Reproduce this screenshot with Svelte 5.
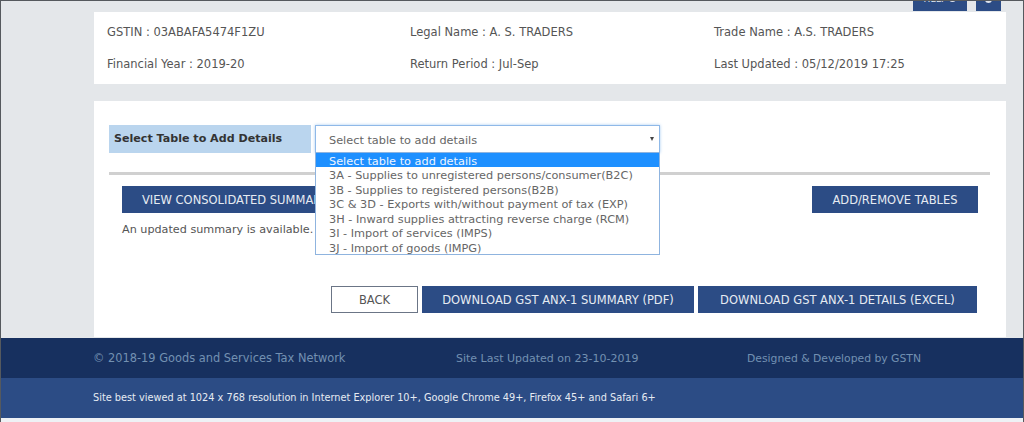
<script>
	const options = [
		'Select table to add details',
		'3A - Supplies to unregistered persons/consumer(B2C)',
		'3B - Supplies to registered persons(B2B)',
		'3C & 3D - Exports with/without payment of tax (EXP)',
		'3H - Inward supplies attracting reverse charge (RCM)',
		'3I - Import of services (IMPS)',
		'3J - Import of goods (IMPG)'
	];
</script>

<div class="page">
	<main class="content">
		<div class="top-actions">
			<button type="button" class="btn help">HELP <span class="dot"></span></button>
			<button type="button" class="btn refresh"><span class="dot"></span></button>
		</div>

		<section class="card info">
			<div class="info-row">
				<span>GSTIN : 03ABAFA5474F1ZU</span>
				<span>Legal Name : A. S. TRADERS</span>
				<span>Trade Name : A.S. TRADERS</span>
			</div>
			<div class="info-row">
				<span>Financial Year : 2019-20</span>
				<span>Return Period : Jul-Sep</span>
				<span>Last Updated : 05/12/2019 17:25</span>
			</div>
		</section>

		<section class="card tables">
			<div class="select-row">
				<div class="select-label">Select Table to Add Details</div>
				<div class="select">
					<div class="select-box">
						<span>Select table to add details</span>
						<span class="caret"></span>
					</div>
					<ul class="menu">
						{#each options as opt, i}
							<li class:active={i === 0}>{opt}</li>
						{/each}
					</ul>
				</div>
			</div>
			<hr />
			<div class="summary-row">
				<button type="button" class="btn view">VIEW CONSOLIDATED SUMMARY</button>
				<button type="button" class="btn add">ADD/REMOVE TABLES</button>
			</div>
			<p class="note">An updated summary is available.</p>
			<div class="actions">
				<button type="button" class="btn back">BACK</button>
				<button type="button" class="btn pdf">DOWNLOAD GST ANX-1 SUMMARY (PDF)</button>
				<button type="button" class="btn excel">DOWNLOAD GST ANX-1 DETAILS (EXCEL)</button>
			</div>
		</section>
	</main>

	<footer>
		<div class="foot-top">
			<span class="copy">© 2018-19 Goods and Services Tax Network</span>
			<span>Site Last Updated on 23-10-2019</span>
			<span class="dev">Designed &amp; Developed by GSTN</span>
		</div>
		<div class="foot-bottom">
			Site best viewed at 1024 x 768 resolution in Internet Explorer 10+, Google Chrome 49+, Firefox 45+ and Safari 6+
		</div>
	</footer>
</div>

<style>
	:global(body) {
		margin: 0;
		background: #fff;
	}
	.page {
		width: 1024px;
		height: 422px;
		overflow: hidden;
		box-sizing: border-box;
		border-top: 1px solid #55595e;
		border-left: 1px solid #55595e;
		border-right: 1px solid #55595e;
		background: #e4e7ea;
		font-family: "DejaVu Sans", sans-serif;
		font-size: 11.5px;
		color: #555;
	}
	.content {
		padding: 0 17px 0 93px;
		height: 337px;
		box-sizing: border-box;
	}
	.top-actions {
		display: flex;
		justify-content: flex-end;
		gap: 9px;
		height: 10px;
		padding-right: 5px;
		align-items: flex-end;
	}
	.btn {
		font: inherit;
		border: none;
		background: #2c4c85;
		color: #e6ebf2;
		padding: 0;
		box-sizing: border-box;
		white-space: nowrap;
	}
	.help {
		width: 54px;
		height: 20px;
		font-size: 9px;
		padding-bottom: 4px;
		line-height: 10px;
	}
	.refresh {
		width: 25px;
		height: 20px;
		padding-bottom: 4px;
		line-height: 10px;
	}
	.dot {
		display: inline-block;
		width: 7px;
		height: 7px;
		border-radius: 50%;
		background: #dfe5ee;
	}
	.card {
		background: #fff;
		box-sizing: border-box;
	}
	.info {
		margin-top: 1px;
		height: 72px;
		padding: 13px 13px 0;
	}
	.info-row {
		display: grid;
		grid-template-columns: 303px 304px 1fr;
		line-height: 14px;
		margin-bottom: 18px;
	}
	.tables {
		margin-top: 17px;
		height: 236px;
		padding: 24px 16px 0 15px;
	}
	.select-row {
		display: flex;
		gap: 4px;
		font-size: 11.3px;
	}
	.select-label {
		width: 202px;
		height: 28px;
		box-sizing: border-box;
		background: #bad5ee;
		color: #333;
		font-size: 11.1px;
		font-weight: bold;
		line-height: 28px;
		padding-left: 5px;
	}
	.select {
		position: relative;
		width: 345px;
	}
	.select-box {
		height: 28px;
		box-sizing: border-box;
		border: 1px solid #8fb9e8;
		box-shadow: 0 0 3px #a9cdf2;
		background: #fff;
		display: flex;
		justify-content: space-between;
		align-items: center;
		padding: 3px 5px 0 13px;
		color: #666;
	}
	.caret {
		width: 0;
		height: 0;
		border-left: 2.5px solid transparent;
		border-right: 2.5px solid transparent;
		border-top: 4px solid #444;
		margin-bottom: 3px;
	}
	.menu {
		position: absolute;
		top: 27px;
		left: 0;
		right: 0;
		margin: 0;
		padding: 0;
		list-style: none;
		background: #fff;
		border: 1px solid #8fb4df;
		z-index: 2;
		color: #666;
	}
	.menu li {
		height: 14.43px;
		line-height: 17px;
		padding-left: 13px;
	}
	.menu li.active {
		background: #1e90ff;
		color: #eef5ff;
	}
	hr {
		border: none;
		height: 3px;
		background: #d0d0d0;
		margin: 19px 0 0;
	}
	.summary-row {
		display: flex;
		justify-content: space-between;
		margin: 11px 12px 0 13px;
	}
	.view {
		width: 240px;
		height: 27px;
		text-align: left;
		padding-left: 20px;
		padding-top: 1px;
	}
	.add {
		width: 166px;
		height: 27px;
		padding-top: 1px;
	}
	.note {
		margin: 10px 0 0 13px;
		line-height: 14px;
		font-size: 11.2px;
	}
	.actions {
		display: flex;
		gap: 4px;
		margin: 49px 0 0 222px;
	}
	.back {
		width: 87px;
		height: 27px;
		background: #fff;
		color: #555;
		border: 1px solid #6b7586;
	}
	.pdf {
		width: 272px;
		height: 27px;
	}
	.excel {
		width: 279px;
		height: 27px;
	}
	footer {
		height: 84px;
		background: #eef1f5;
	}
	.foot-top {
		height: 40px;
		background: #17305f;
		color: #7391b2;
		display: grid;
		grid-template-columns: 92px 363px 291px 1fr;
		align-items: center;
		font-size: 11px;
	}
	.foot-top .copy {
		grid-column: 2;
		font-size: 11.4px;
	}
	.foot-top .dev {
		font-size: 10.8px;
	}
	.foot-bottom {
		height: 40px;
		background: #2c4c85;
		color: #e6ebf2;
		font-size: 9.75px;
		line-height: 40px;
		padding-left: 92px;
	}
</style>
